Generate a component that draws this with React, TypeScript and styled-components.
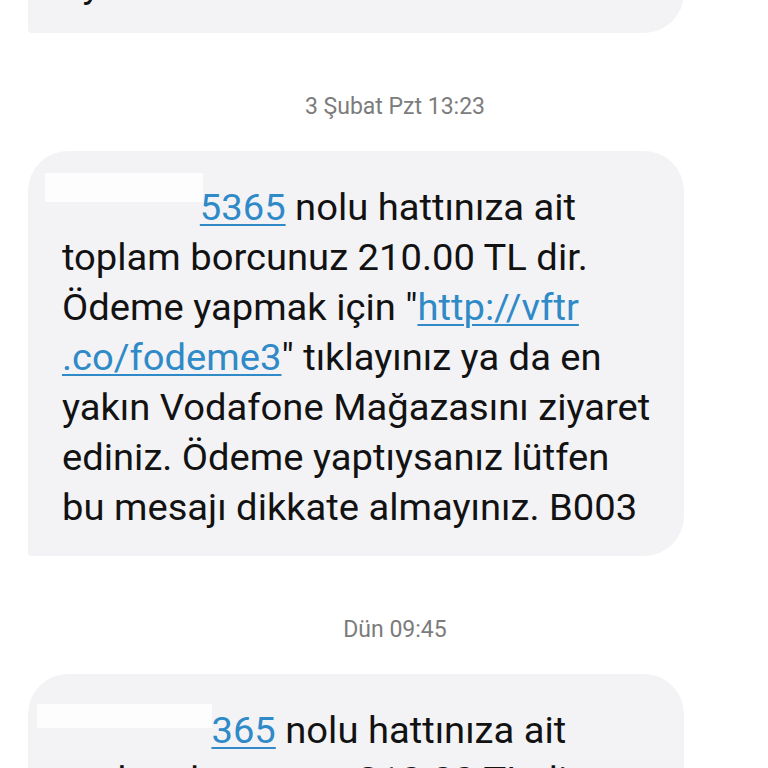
import React from "react";
import styled, { createGlobalStyle } from "styled-components";

const GlobalStyle = createGlobalStyle`
  html, body {
    margin: 0;
    padding: 0;
    background: #ffffff;
  }
  body {
    font-family: Roboto, "Noto Sans", sans-serif;
    overflow: hidden;
  }
`;

const Screen = styled.div`
  width: 768px;
  height: 768px;
  overflow: hidden;
  background: #ffffff;
`;

const Thread = styled.div`
  display: flex;
  flex-direction: column;
  align-items: flex-start;
  margin-top: -72px;
`;

const Bubble = styled.div`
  position: relative;
  box-sizing: border-box;
  width: 656px;
  margin-left: 28px;
  padding: 32px 20px 23px 34px;
  background: #f3f3f6;
  border-radius: 40px 40px 40px 4px;
  color: #121212;
  font-size: 36px;
  line-height: 50px;
`;

const Line = styled.div<{ $stretch?: number }>`
  white-space: nowrap;
  transform-origin: left center;
  transform: scaleX(${(p) => p.$stretch ?? 1.06});
`;

const Link = styled.span`
  color: #2f8ac7;
  text-decoration: underline;
  text-decoration-thickness: 2px;
  text-underline-offset: 4px;
`;

const Spacer = styled.span<{ $w: number }>`
  display: inline-block;
  width: ${(p) => p.$w}px;
`;

const Redaction = styled.div<{ $left: number; $top: number; $w: number; $h: number }>`
  position: absolute;
  left: ${(p) => p.$left}px;
  top: ${(p) => p.$top}px;
  width: ${(p) => p.$w}px;
  height: ${(p) => p.$h}px;
  background: #fdfdfd;
`;

const Stamp = styled.div`
  align-self: stretch;
  box-sizing: border-box;
  padding-left: 22px;
  margin: 59px 0 29px;
  text-align: center;
  color: #7c7c7c;
  font-size: 23px;
  line-height: 30px;
`;

function Message({ lead, number }: { lead: number; number: string }) {
  return (
    <>
      <Line>
        <Spacer $w={lead} />
        <Link>{number}</Link> nolu hattınıza ait
      </Line>
      <Line>toplam borcunuz 210.00 TL dir.</Line>
      <Line>
        Ödeme yapmak için "<Link>http://vftr</Link>
      </Line>
      <Line>
        <Link>.co/fodeme3</Link>" tıklayınız ya da en
      </Line>
      <Line>yakın Vodafone Mağazasını ziyaret</Line>
      <Line>ediniz. Ödeme yaptıysanız lütfen</Line>
      <Line>bu mesajı dikkate almayınız. B003</Line>
    </>
  );
}

export default function App() {
  return (
    <Screen>
      <GlobalStyle />
      <Thread>
        <Bubble>
          <Line>aylık tutarı bilinir</Line>
        </Bubble>
        <Stamp>3 Şubat Pzt 13:23</Stamp>
        <Bubble>
          <Message lead={130} number="5365" />
          <Redaction $left={17} $top={22} $w={158} $h={29} />
        </Bubble>
        <Stamp>Dün 09:45</Stamp>
        <Bubble>
          <Message lead={141} number="365" />
          <Redaction $left={9} $top={30} $w={175} $h={24} />
        </Bubble>
      </Thread>
    </Screen>
  );
}
